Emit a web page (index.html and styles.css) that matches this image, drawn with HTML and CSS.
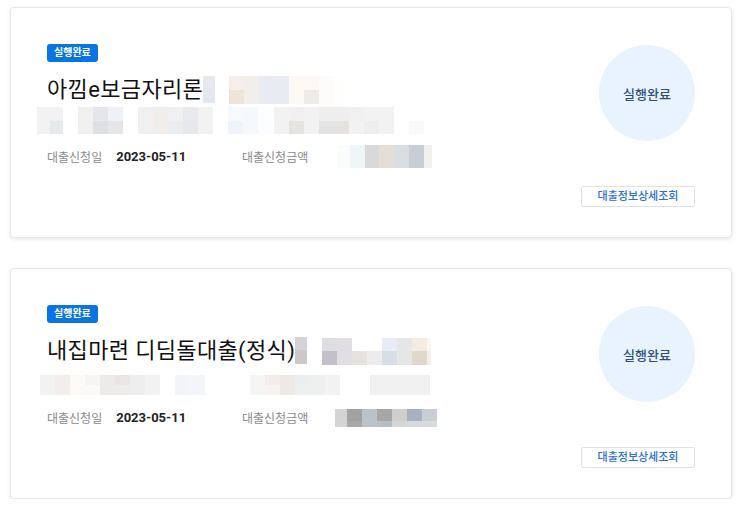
FILE: index.html
```html
<!DOCTYPE html>
<html lang="ko">
<head>
<meta charset="utf-8">
<title>대출 목록</title>
<link rel="stylesheet" href="styles.css">
</head>
<body>
<div class="list">
  <article class="card">
    <div class="main">
      <span class="badge">실행완료</span>
      <h2 class="title">
        <span class="title-text">아낌e보금자리론</span>
        <span class="mz t1a">
          <i style="background:#e6eaef"></i><i style="background:#e3e8ee"></i>
        </span>
        <span class="mz t1b">
          <i style="background:#f4efea"></i><i style="background:#f0e4d9"></i>
          <i style="background:#f2eeea"></i><i style="background:#f2eeea"></i>
          <i style="background:#e8ebf2"></i><i style="background:#e8ebf2"></i>
          <i style="background:#e8ebf2"></i><i style="background:#e8ebf2"></i>
          <i style="background:#fdf8f3"></i><i style="background:#fdf8f3"></i>
          <i style="background:#fdf8f3"></i><i style="background:#f0ebe6"></i>
          <i style="background:#fefcfa"></i><i style="background:#fefcfa"></i>
          <i style="background:#fefefd"></i><i style="background:#fffefd"></i>
        </span>
      </h2>
      <div class="sub">
        <span class="mz s27 c13" style="margin-left:-10px">
          <i style="background:#f2f2f3"></i><i style="background:#f2f2f3"></i>
          <i style="background:#f2f2f3"></i><i style="background:#e6e9ed"></i>
        </span>
        <span class="mz s27" style="margin-left:15px">
          <i style="background:#f0f0f1"></i><i style="background:#f0f0f1"></i>
          <i style="background:#e4e6ea"></i><i style="background:#dcdfe3"></i>
          <i style="background:#eef2f7"></i><i style="background:#e6e6e8"></i>
        </span>
        <span class="mz s27" style="margin-left:15px">
          <i style="background:#f0f0f1"></i><i style="background:#f0f0f1"></i>
          <i style="background:#f0edeb"></i><i style="background:#f0edeb"></i>
          <i style="background:#f0f0f2"></i><i style="background:#ebeef0"></i>
          <i style="background:#e8eaef"></i><i style="background:#e6e8eb"></i>
          <i style="background:#f2f2f3"></i><i style="background:#f2f2f3"></i>
        </span>
        <span class="mz s27" style="margin-left:15px">
          <i style="background:#f7fafd"></i><i style="background:#eef4fc"></i>
          <i style="background:#f3f9fd"></i><i style="background:#f3f9fd"></i>
          <i style="background:#fdfeff"></i><i style="background:#fbfdfe"></i>
        </span>
        <span class="mz s27" style="margin-left:1px">
          <i style="background:#f2f2f2"></i><i style="background:#f2f2f2"></i>
          <i style="background:#f0f0f0"></i><i style="background:#e6e3e1"></i>
          <i style="background:#f2f2f2"></i><i style="background:#f2f2f2"></i>
          <i style="background:#eeeeee"></i><i style="background:#e3e3e3"></i>
          <i style="background:#eeeeee"></i><i style="background:#e6e2df"></i>
          <i style="background:#f0f0f0"></i><i style="background:#f2f2f2"></i>
          <i style="background:#f2f2f2"></i><i style="background:#edeef0"></i>
          <i style="background:#f2f2f2"></i><i style="background:#f2f2f2"></i>
        </span>
        <span class="mz s27" style="margin-left:15px">
          <i></i><i style="background:#f7f9fc"></i>
        </span>
      </div>
      <dl class="meta">
        <div class="meta-item date">
          <dt>대출신청일</dt>
          <dd class="value">2023-05-11</dd>
        </div>
        <div class="meta-item">
          <dt>대출신청금액</dt>
          <dd class="amount">
            <span class="mz one m23">
              <i style="background:#fbfdfd"></i>
              <i style="background:#eef6f9"></i>
              <i style="background:#d9d9d9"></i>
              <i style="background:#e5ded7"></i>
              <i style="background:#d9dee3"></i>
              <i style="background:#c7ced5"></i>
              <i style="background:#f0f0ee"></i>
            </span>
          </dd>
        </div>
      </dl>
    </div>
    <div class="side">
      <div class="status-circle">실행완료</div>
      <button class="detail-btn" type="button">대출정보상세조회</button>
    </div>
  </article>

  <article class="card">
    <div class="main">
      <span class="badge">실행완료</span>
      <h2 class="title">
        <span class="title-text">내집마련 디딤돌대출(정식)</span>
        <span class="mz t1a">
          <i style="background:#d5d3d9"></i><i style="background:#ccc7c8"></i>
        </span>
        <span class="mz t2b">
          <i style="background:#dedde3"></i><i style="background:#c3c0cb"></i>
          <i style="background:#e0dde3"></i><i style="background:#e2dfe4"></i>
          <i style="background:#ffffff"></i><i style="background:#e6e2df"></i>
          <i style="background:#ffffff"></i><i style="background:#ececec"></i>
          <i style="background:#e8edf5"></i><i style="background:#d8dee6"></i>
          <i style="background:#e6e6e8"></i><i style="background:#e6e6e6"></i>
          <i style="background:#f5ebe0"></i><i style="background:#e2d7cb"></i>
          <i style="background:#fbf6f0"></i><i style="background:#f5efe8"></i>
        </span>
      </h2>
      <div class="sub">
        <span class="mz s20" style="margin-left:-7px">
          <i style="background:#f2f2f2"></i><i style="background:#f2f2f2"></i>
          <i style="background:#f3eeea"></i><i style="background:#f3eeea"></i>
          <i style="background:#fdfbf6"></i><i style="background:#fdfaf5"></i>
          <i style="background:#f7f5f3"></i><i style="background:#fbfaf9"></i>
          <i style="background:#efeaea"></i><i style="background:#efeaea"></i>
          <i style="background:#ebe6e3"></i><i style="background:#efebe8"></i>
          <i style="background:#efeeee"></i><i style="background:#efeeee"></i>
          <i style="background:#f2f2f2"></i><i style="background:#f2f2f2"></i>
        </span>
        <span class="mz s20" style="margin-left:15px">
          <i style="background:#f1f5fa"></i><i style="background:#f1f5fa"></i>
          <i style="background:#f2f6fb"></i><i style="background:#f2f6fb"></i>
        </span>
        <span class="mz s20" style="margin-left:45px">
          <i style="background:#f7f5f3"></i><i style="background:#f7f5f3"></i>
          <i style="background:#f3ece8"></i><i style="background:#f8f3ee"></i>
          <i style="background:#efe9e6"></i><i style="background:#efe9e6"></i>
          <i style="background:#ebeeef"></i><i style="background:#eef0f0"></i>
          <i style="background:#eef0f0"></i><i style="background:#eef0f0"></i>
          <i style="background:#f2f2f2"></i><i style="background:#f2f2f2"></i>
        </span>
        <span class="mz s20" style="margin-left:30px">
          <i style="background:#f0f0f0"></i><i style="background:#f0f0f0"></i>
          <i style="background:#f0f0f0"></i><i style="background:#f0f0f0"></i>
          <i style="background:#f0f0f0"></i><i style="background:#f0f0f0"></i>
          <i style="background:#f0f0f0"></i><i style="background:#f0f0f0"></i>
        </span>
      </div>
      <dl class="meta">
        <div class="meta-item date">
          <dt>대출신청일</dt>
          <dd class="value">2023-05-11</dd>
        </div>
        <div class="meta-item">
          <dt>대출신청금액</dt>
          <dd class="amount amount-2">
            <span class="mz m18">
              <i style="background:#d4d4d4"></i><i style="background:#d4d4d4"></i>
              <i style="background:#a2a2a2"></i><i style="background:#a9a9a9"></i>
              <i style="background:#bcc2c9"></i><i style="background:#bcc2c9"></i>
              <i style="background:#a6a6a6"></i><i style="background:#b6bdc5"></i>
              <i style="background:#cfcfcb"></i><i style="background:#d5d5d5"></i>
              <i style="background:#a8b1c1"></i><i style="background:#d6dbe2"></i>
              <i style="background:#c9ced4"></i><i style="background:#d6dbe1"></i>
            </span>
          </dd>
        </div>
      </dl>
    </div>
    <div class="side">
      <div class="status-circle">실행완료</div>
      <button class="detail-btn" type="button">대출정보상세조회</button>
    </div>
  </article>
</div>
</body>
</html>
```

FILE: styles.css
```css
* {
  box-sizing: border-box;
}

html, body {
  margin: 0;
  padding: 0;
  background: #ffffff;
}

body {
  font-family: Roboto, "Noto Sans CJK KR", "Noto Sans", sans-serif;
  color: #111;
}

.list {
  display: flex;
  flex-direction: column;
  gap: 30px;
  padding: 7px 11px 0 10px;
}

.card {
  display: flex;
  justify-content: space-between;
  height: 231px;
  padding: 36px 36px 30px 36px;
  background: #fff;
  border: 1px solid #e9e9e9;
  border-radius: 4px;
  box-shadow: 0 1px 4px rgba(0, 0, 0, 0.10);
}

.main {
  display: flex;
  flex-direction: column;
  align-items: flex-start;
}

.badge {
  display: inline-block;
  height: 18px;
  padding: 0 7px;
  line-height: 18px;
  font-size: 10px;
  font-weight: 700;
  color: #fff;
  background: #0a74e4;
  border-radius: 3px;
}

.title {
  display: flex;
  align-items: center;
  height: 30px;
  margin: 13px 0 0;
  font-size: 22px;
  font-weight: 400;
  line-height: 30px;
  letter-spacing: 0.35px;
  color: #111;
}

.title-text {
  white-space: nowrap;
}

/* pixelated placeholders for masked content */
.mz {
  display: grid;
  grid-auto-flow: column;
  grid-template-rows: 1fr 1fr;
  grid-auto-columns: 15px;
  flex: none;
}

.mz i {
  display: block;
}

.mz.one {
  grid-template-rows: 1fr;
}

.t1a {
  height: 27px;
  grid-auto-columns: 12px;
  margin-top: -2px;
}

.t1b {
  height: 28px;
  margin-left: 14px;
  grid-template-columns: repeat(7, 15px) 10px;
}

.t2b {
  height: 27px;
  margin-left: 15px;
  grid-template-columns: repeat(7, 15px) 4px;
}

.sub {
  display: flex;
  align-items: flex-end;
  height: 27px;
  margin-top: 2px;
}

.s27 {
  height: 27px;
}

.s20 {
  height: 20px;
}

.c13 {
  grid-auto-columns: 13px;
}

.meta {
  display: flex;
  align-items: center;
  height: 23px;
  margin: 11px 0 0;
}

.meta-item {
  display: flex;
  align-items: center;
  margin: 0;
}

.meta-item.date {
  width: 195px;
}

.meta dt {
  font-size: 12px;
  color: #8a8a8a;
  margin-right: 14px;
}

.meta dd {
  margin: 0;
}

.meta .value {
  font-size: 13px;
  font-weight: 700;
  color: #222;
}

.meta .amount {
  margin-left: 15px;
}

.meta .amount-2 {
  margin-left: 13px;
}

.m23 {
  height: 23px;
  grid-template-columns: 13px 15px 14px 15px 15px 15px 8px;
}

.m18 {
  height: 18px;
  grid-template-rows: 12px 6px;
  grid-template-columns: 12px repeat(6, 15px);
}

.side {
  display: flex;
  flex-direction: column;
  align-items: flex-end;
}

.status-circle {
  display: flex;
  align-items: center;
  justify-content: center;
  width: 96px;
  height: 96px;
  margin-top: 1px;
  border-radius: 50%;
  background: #e9f3fe;
  color: #2d4f7d;
  font-size: 13px;
  font-weight: 500;
}

.detail-btn {
  margin-top: auto;
  width: 114px;
  height: 21px;
  padding: 0;
  border: 1px solid #dfe3e8;
  border-radius: 2px;
  background: #fff;
  color: #2a6ed8;
  font-family: Roboto, "Noto Sans CJK KR", sans-serif;
  font-size: 11px;
  font-weight: 500;
  line-height: 19px;
}
```
